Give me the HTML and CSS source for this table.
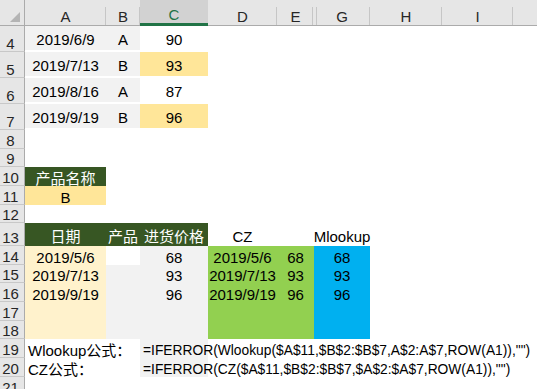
FILE: index.html
```html
<!DOCTYPE html>
<html lang="zh-CN">
<head>
<meta charset="utf-8">
<title>Sheet</title>
<link rel="stylesheet" href="styles.css">
</head>
<body>
<div class="sheet">
  <div class="row hdr">
    <div class="corner"><svg width="24" height="25" viewBox="0 0 24 25"><polygon points="20,12 20,22 10,22" fill="#b4b4b4"/></svg></div>
    <div class="ch">A</div>
    <div class="ch">B</div>
    <div class="ch sel">C</div>
    <div class="ch">D</div>
    <div class="ch e">E</div>
    <div class="ch g">G</div>
    <div class="ch">H</div>
    <div class="ch">I</div>
    <div class="ch last"></div>
  </div>

  <div class="row h26 band">
    <div class="rh">4</div>
    <div class="c gray">2019/6/9</div><div class="c gray">A</div><div class="c">90</div>
    <div class="c"></div><div class="c"></div><div class="c"></div><div class="c"></div><div class="c"></div><div class="c"></div>
  </div>
  <div class="row h26 band">
    <div class="rh">5</div>
    <div class="c gray">2019/7/13</div><div class="c gray">B</div><div class="c gold">93</div>
    <div class="c"></div><div class="c"></div><div class="c"></div><div class="c"></div><div class="c"></div><div class="c"></div>
  </div>
  <div class="row h26 band">
    <div class="rh">6</div>
    <div class="c gray">2019/8/16</div><div class="c gray">A</div><div class="c">87</div>
    <div class="c"></div><div class="c"></div><div class="c"></div><div class="c"></div><div class="c"></div><div class="c"></div>
  </div>
  <div class="row h26 band">
    <div class="rh">7</div>
    <div class="c gray">2019/9/19</div><div class="c gray">B</div><div class="c gold">96</div>
    <div class="c"></div><div class="c"></div><div class="c"></div><div class="c"></div><div class="c"></div><div class="c"></div>
  </div>

  <div class="row h19">
    <div class="rh">8</div>
    <div class="c"></div><div class="c"></div><div class="c"></div><div class="c"></div><div class="c"></div><div class="c"></div><div class="c"></div><div class="c"></div><div class="c"></div>
  </div>
  <div class="row h18">
    <div class="rh">9</div>
    <div class="c"></div><div class="c"></div><div class="c"></div><div class="c"></div><div class="c"></div><div class="c"></div><div class="c"></div><div class="c"></div><div class="c"></div>
  </div>
  <div class="row h19">
    <div class="rh">10</div>
    <div class="c dark">产品名称</div><div class="c"></div><div class="c"></div><div class="c"></div><div class="c"></div><div class="c"></div><div class="c"></div><div class="c"></div><div class="c"></div>
  </div>
  <div class="row h19">
    <div class="rh">11</div>
    <div class="c gold">B</div><div class="c"></div><div class="c"></div><div class="c"></div><div class="c"></div><div class="c"></div><div class="c"></div><div class="c"></div><div class="c"></div>
  </div>
  <div class="row h18">
    <div class="rh">12</div>
    <div class="c"></div><div class="c"></div><div class="c"></div><div class="c"></div><div class="c"></div><div class="c"></div><div class="c"></div><div class="c"></div><div class="c"></div>
  </div>
  <div class="row h23">
    <div class="rh">13</div>
    <div class="c dark">日期</div><div class="c dark">产品</div><div class="c dark">进货价格</div>
    <div class="c">CZ</div><div class="c"></div><div class="c">Mlookup</div>
    <div class="c"></div><div class="c"></div><div class="c"></div>
  </div>
  <div class="row h19">
    <div class="rh">14</div>
    <div class="c cream">2019/5/6</div><div class="c"></div><div class="c gray">68</div>
    <div class="c green">2019/5/6</div><div class="c green">68</div><div class="c blue">68</div>
    <div class="c"></div><div class="c"></div><div class="c"></div>
  </div>
  <div class="row h18">
    <div class="rh">15</div>
    <div class="c cream">2019/7/13</div><div class="c gray"></div><div class="c gray">93</div>
    <div class="c green">2019/7/13</div><div class="c green">93</div><div class="c blue">93</div>
    <div class="c"></div><div class="c"></div><div class="c"></div>
  </div>
  <div class="row h19">
    <div class="rh">16</div>
    <div class="c cream">2019/9/19</div><div class="c gray"></div><div class="c gray">96</div>
    <div class="c green">2019/9/19</div><div class="c green">96</div><div class="c blue">96</div>
    <div class="c"></div><div class="c"></div><div class="c"></div>
  </div>
  <div class="row h19">
    <div class="rh">17</div>
    <div class="c cream"></div><div class="c gray"></div><div class="c gray"></div>
    <div class="c green"></div><div class="c green"></div><div class="c blue"></div>
    <div class="c"></div><div class="c"></div><div class="c"></div>
  </div>
  <div class="row h18">
    <div class="rh">18</div>
    <div class="c cream"></div><div class="c gray"></div><div class="c gray"></div>
    <div class="c green"></div><div class="c green"></div><div class="c blue"></div>
    <div class="c"></div><div class="c"></div><div class="c"></div>
  </div>
  <div class="row h19">
    <div class="rh">19</div>
    <div class="c left">Wlookup公式：</div><div class="c"></div>
    <div class="c gray left formula">=IFERROR(Wlookup($A$11,$B$2:$B$7,A$2:A$7,ROW(A1)),"")</div>
    <div class="c"></div><div class="c"></div><div class="c"></div><div class="c"></div><div class="c"></div><div class="c"></div>
  </div>
  <div class="row h19">
    <div class="rh">20</div>
    <div class="c left">CZ公式：</div><div class="c"></div>
    <div class="c gray left formula">=IFERROR(CZ($A$11,$B$2:$B$7,$A$2:$A$7,ROW(A1)),"")</div>
    <div class="c"></div><div class="c"></div><div class="c"></div><div class="c"></div><div class="c"></div><div class="c"></div>
  </div>
  <div class="row h19">
    <div class="rh">21</div>
    <div class="c"></div><div class="c"></div><div class="c"></div><div class="c"></div><div class="c"></div><div class="c"></div><div class="c"></div><div class="c"></div><div class="c"></div>
  </div>
</div>
</body>
</html>
```

FILE: styles.css
```css
* { box-sizing: border-box; }

html, body {
  margin: 0;
  padding: 0;
  background: #ffffff;
}

body {
  width: 537px;
  height: 389px;
  overflow: hidden;
  font-family: "Liberation Sans", "Noto Sans CJK SC", sans-serif;
  font-size: 15px;
  color: #000000;
}

.sheet {
  display: flex;
  flex-direction: column;
}

.row {
  display: grid;
  grid-template-columns: 25px 81px 34px 68px 69px 37px 56px 72px 71px 1fr;
}

.hdr { height: 26px; }
.h26 { height: 26px; }
.h23 { height: 23px; }
.h19 { height: 19px; }
.h18 { height: 18px; }

/* column header */
.corner {
  background: #e6e6e6;
  border-right: 1px solid #ababab;
  border-bottom: 1px solid #ababab;
}
.corner svg { display: block; }

.ch {
  background-color: #e6e6e6;
  border-bottom: 1px solid #ababab;
  background-image: linear-gradient(#c6c6c6, #c6c6c6);
  background-size: 1px 18px;
  background-position: right bottom;
  background-repeat: no-repeat;
  display: flex;
  justify-content: center;
  align-items: flex-end;
  line-height: 15px;
  font-size: 15px;
  color: #262626;
  padding-bottom: 1px;
}
.ch.sel {
  background-color: #d2d2d2;
  background-image: none;
  color: #217346;
  border-bottom-color: #217346;
  box-shadow: inset 0 -2px 0 #217346;
  padding-bottom: 3px;
}
.ch.e { background-position: right 1px bottom; }
.ch.g {
  background-image: linear-gradient(#c6c6c6, #c6c6c6), linear-gradient(#c6c6c6, #c6c6c6);
  background-size: 1px 18px, 1px 18px;
  background-position: right bottom, 2px bottom;
}
.ch.last { background-image: none; }

/* row header */
.rh {
  background: #e6e6e6;
  border-right: 1px solid #ababab;
  border-bottom: 1px solid #c8c8c8;
  display: flex;
  justify-content: center;
  align-items: flex-end;
  padding-right: 3px;
  line-height: 15px;
  font-size: 15px;
  color: #262626;
}

/* cells */
.c {
  display: flex;
  justify-content: center;
  align-items: center;
  padding-top: 4px;
  line-height: 14px;
  white-space: nowrap;
  min-width: 0;
}
.band .c { border-bottom: 2px solid #ffffff; }

.left {
  justify-content: flex-start;
  padding-left: 3px;
}
.formula { font-size: 13.8px; }

.gray { background: #f2f2f2; }
.gold { background: #ffe699; }
.cream { background: #fff2cc; }
.dark { background: #375623; color: #ffffff; }
.green { background: #92d050; }
.blue { background: #00b0f0; }
```
